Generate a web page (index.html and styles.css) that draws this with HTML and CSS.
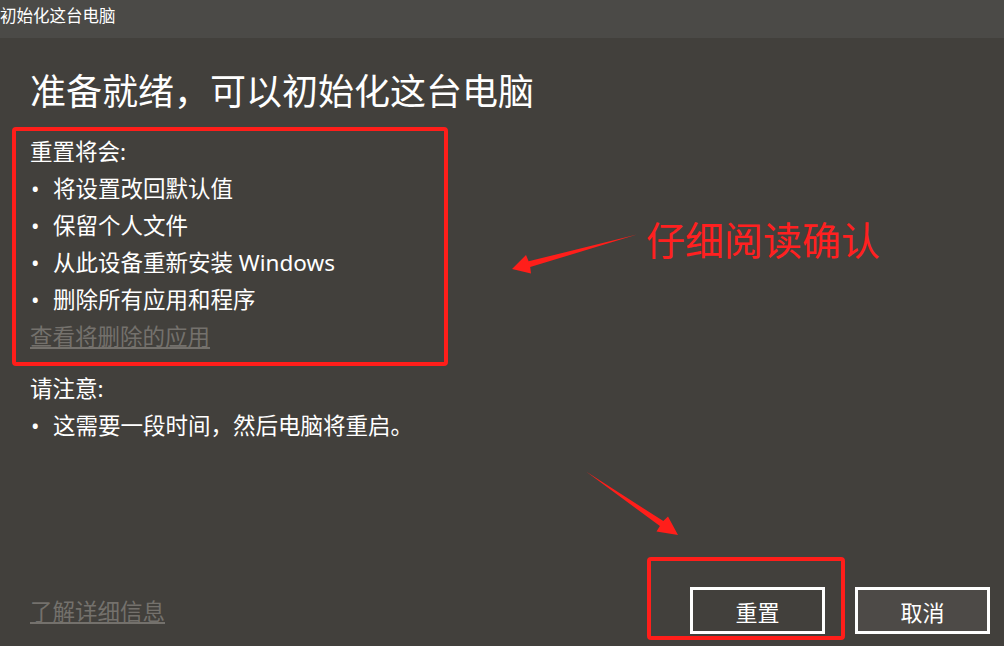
FILE: index.html
```html
<!DOCTYPE html>
<html lang="zh-CN">
<head>
    <meta charset="UTF-8">
    <title>初始化这台电脑</title>
    <link rel="stylesheet" href="styles.css">
</head>
<body>
    <div class="window">
        <div class="title-bar">初始化这台电脑</div>

        <div class="content">
            <h1>准备就绪，可以初始化这台电脑</h1>

            <div class="section">
                <div class="section-title">重置将会:</div>
                <ul>
                    <li>将设置改回默认值</li>
                    <li>保留个人文件</li>
                    <li>从此设备重新安装 Windows</li>
                    <li>删除所有应用和程序</li>
                </ul>
                <a class="link" href="#">查看将删除的应用</a>
            </div>

            <div class="section notice">
                <div class="section-title">请注意:</div>
                <ul>
                    <li>这需要一段时间，然后电脑将重启。</li>
                </ul>
            </div>
        </div>

        <div class="footer">
            <a class="link" href="#">了解详细信息</a>
            <div class="buttons">
                <button class="btn btn-primary">重置</button>
                <button class="btn">取消</button>
            </div>
        </div>

        <!-- annotations drawn on top of the screenshot -->
        <div class="mark mark-list"></div>
        <div class="mark mark-button"></div>
        <div class="note">仔细阅读确认</div>
        <svg class="arrows" width="1004" height="646" viewBox="0 0 1004 646">
            <polygon points="512,269 526,255 528.6,261.3 637,234.5 530.2,267.1 531,273.5" />
            <polygon points="678,535 668,516.5 663.3,521.1 586,471.5 659.9,526.1 656.5,531.5" />
        </svg>
    </div>
</body>
</html>
```

FILE: styles.css
```css
body {
    margin: 0;
    padding: 0;
    background-color: #42403c;
    font-family: "Noto Sans", "Noto Sans CJK SC", sans-serif;
    color: #fff;
}
.window {
    position: relative;
    display: flex;
    flex-direction: column;
    height: 100vh;
    overflow: hidden;
}
.title-bar {
    height: 38px;
    line-height: 32px;
    background-color: #4b4a47;
    font-size: 16.5px;
    white-space: nowrap;
}
.content {
    flex: 1;
    padding: 30px 30px 0 30px;
}
h1 {
    margin: 0 0 17px 0;
    font-size: 36px;
    font-weight: 400;
    line-height: 48px;
}
.section {
    font-size: 22.5px;
    line-height: 37px;
}
.notice {
    margin-top: 15px;
}
ul {
    margin: 0;
    padding: 0;
    list-style: none;
}
li::before {
    content: "•";
    display: inline-block;
    width: 22px;
    padding-left: 1px;
}
.link {
    color: #74716c;
    text-decoration: underline;
    text-underline-offset: 2px;
}
.footer {
    display: flex;
    justify-content: space-between;
    align-items: center;
    padding: 0 14px 12px 30px;
    font-size: 22.5px;
}
.buttons {
    display: flex;
    gap: 30px;
}
.btn {
    width: 135px;
    height: 47px;
    border: 3px solid #fff;
    background-color: #4d4a47;
    color: #fff;
    font-family: inherit;
    font-size: 22px;
    padding: 0;
}
.btn-primary {
    background-color: #42403c;
}
.mark {
    position: absolute;
    border: 4px solid #ff1e1a;
    border-radius: 4px;
}
.mark-list {
    left: 12px;
    top: 127px;
    width: 428px;
    height: 231px;
}
.mark-button {
    left: 647px;
    top: 557px;
    width: 190px;
    height: 75px;
}
.note {
    position: absolute;
    left: 646px;
    top: 215px;
    font-size: 39px;
    line-height: 50px;
    color: #ff2020;
    white-space: nowrap;
}
.arrows {
    position: absolute;
    left: 0;
    top: 0;
    fill: #ff1e1a;
}
```
